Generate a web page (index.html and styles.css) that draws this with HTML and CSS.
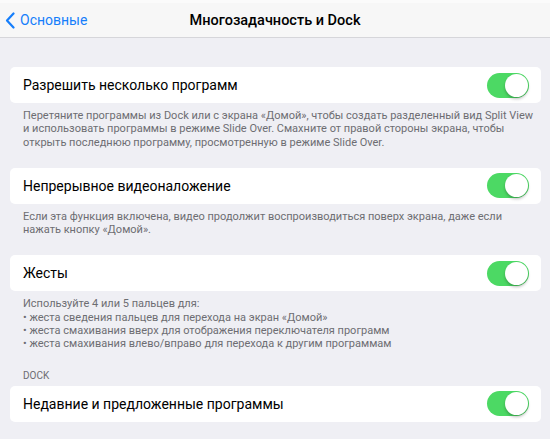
FILE: index.html
```html
<!DOCTYPE html>
<html lang="ru">
<head>
  <meta charset="UTF-8">
  <meta name="viewport" content="width=device-width, initial-scale=1.0">
  <title>Многозадачность и Dock</title>
  <link rel="stylesheet" href="styles.css">
</head>
<body>
  <header class="navbar">
    <a class="back" href="#">
      <svg class="chevron" width="10" height="17" viewBox="0 0 10 17">
        <path d="M8.5 1.5 L2 8.5 L8.5 15.5" fill="none" stroke="#157efb" stroke-width="2.2" stroke-linecap="round" stroke-linejoin="round"/>
      </svg>
      Основные
    </a>
    <h1 class="title">Многозадачность и Dock</h1>
  </header>

  <main class="content">
    <section class="group">
      <div class="cell">
        <span class="cell-label">Разрешить несколько программ</span>
        <span class="switch on"></span>
      </div>
      <p class="footer">Перетяните программы из Dock или с экрана «Домой», чтобы создать разделенный вид Split View и использовать программы в режиме Slide Over. Смахните от правой стороны экрана, чтобы открыть последнюю программу, просмотренную в режиме Slide Over.</p>
    </section>

    <section class="group">
      <div class="cell">
        <span class="cell-label">Непрерывное видеоналожение</span>
        <span class="switch on"></span>
      </div>
      <p class="footer">Если эта функция включена, видео продолжит воспроизводиться поверх экрана, даже если нажать кнопку «Домой».</p>
    </section>

    <section class="group">
      <div class="cell">
        <span class="cell-label">Жесты</span>
        <span class="switch on"></span>
      </div>
      <p class="footer">Используйте 4 или 5 пальцев для:<br>
        • жеста сведения пальцев для перехода на экран «Домой»<br>
        • жеста смахивания вверх для отображения переключателя программ<br>
        • жеста смахивания влево/вправо для перехода к другим программам</p>
    </section>

    <section class="group">
      <div class="group-header">DOCK</div>
      <div class="cell">
        <span class="cell-label">Недавние и предложенные программы</span>
        <span class="switch on"></span>
      </div>
    </section>
  </main>
</body>
</html>
```

FILE: styles.css
```css
body {
  margin: 0;
  font-family: Roboto, "Noto Sans", sans-serif;
  background-color: #efeff4;
  color: #000;
}
.navbar {
  position: relative;
  height: 38px;
  background-color: #f7f7f7;
  border-bottom: 1px solid #d6d6da;
  border-top: 3px solid #fbfbfb;
  box-sizing: border-box;
  display: flex;
  align-items: center;
  justify-content: center;
}
.back {
  position: absolute;
  left: 5px;
  top: 0;
  bottom: 0;
  display: flex;
  align-items: center;
  gap: 5px;
  color: #157efb;
  text-decoration: none;
  font-size: 14px;
}
.chevron {
  display: block;
}
.title {
  margin: 0;
  font-size: 14.5px;
  font-weight: 500;
}
.content {
  padding: 29px 9px 0 10px;
}
.group {
  margin-bottom: 19px;
}
.cell {
  background-color: #fff;
  border-radius: 5px;
  height: 36px;
  display: flex;
  align-items: center;
  justify-content: space-between;
  padding: 0 12px 0 13px;
}
.cell-label {
  font-size: 14px;
}
.switch {
  position: relative;
  width: 42px;
  height: 25px;
  border-radius: 13px;
  background-color: #4cd964;
}
.switch::after {
  content: "";
  position: absolute;
  top: 1px;
  right: 1px;
  width: 23px;
  height: 23px;
  border-radius: 50%;
  background-color: #fff;
  box-shadow: 0 2px 3px rgba(0, 0, 0, 0.25);
}
.footer {
  margin: 6px 0 0;
  padding: 0 0 0 13px;
  font-size: 11px;
  line-height: 13.3px;
  color: #6d6d72;
}
.group-header {
  padding: 0 13px 4px;
  font-size: 10px;
  line-height: 12px;
  color: #6d6d72;
}
```
